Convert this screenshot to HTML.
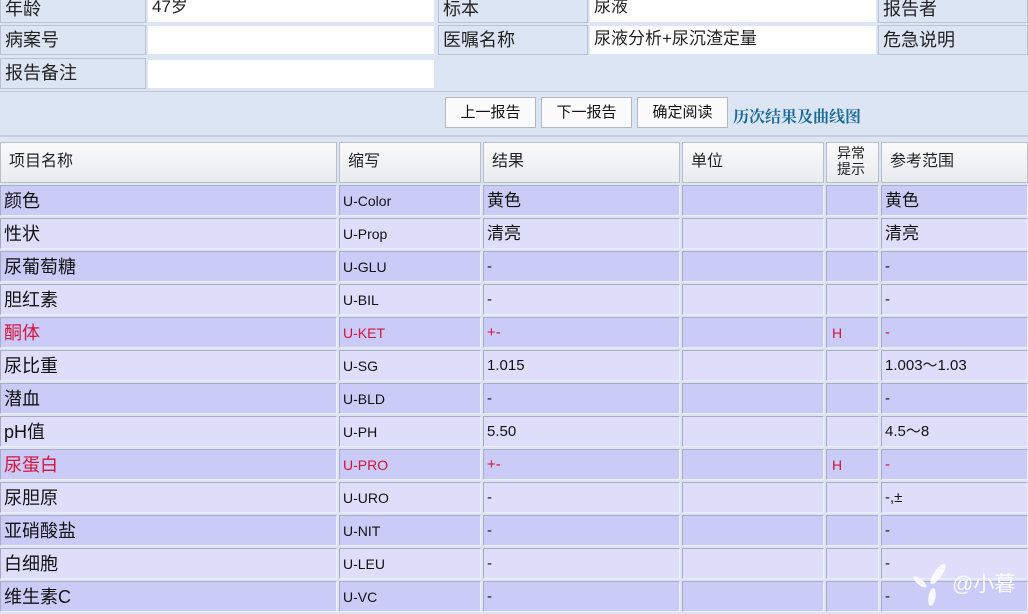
<!DOCTYPE html>
<html><head><meta charset="utf-8"><style>
body{margin:0;width:1028px;height:614px;overflow:hidden;background:#dce5f3;font-family:"Liberation Sans","Noto Sans CJK SC",sans-serif;position:relative}
div{position:absolute;box-sizing:border-box}
.l{background:#dce5f3;border:1px solid #b8c2d2;font-size:18px;color:#222;padding-left:4px;line-height:28px}
.v{background:#fff;font-size:17px;color:#222;padding-left:4px;line-height:26px}
.btn{top:97px;height:31px;background:#fbfbfb;border:1px solid #b5b9c2;font-size:15px;line-height:29px;text-align:center;color:#111}
.h{top:142px;height:41px;background:linear-gradient(#fafafa,#e9ebef);border:1px solid #bdbfc6;font-size:16px;line-height:38px;padding-left:8px;color:#222}
.r{height:31px;border:1px solid #a9acc0;border-right-color:#eef;border-bottom-color:#eef;line-height:30px;padding-left:3px;color:#111;white-space:nowrap}
.a{background:#cbcbf8}.b{background:#dedefa}
.c0{left:0;width:337px;font-size:18px}.c1{left:339px;width:142px;font-size:14px}.c2{left:483px;width:197px;font-size:15px}.c3{left:682px;width:142px}.c4{left:826px;width:53px;font-size:14px;padding-left:5px}.c5{left:881px;width:147px;font-size:15px}
.red{color:#d4143c}
</style></head><body>
<div class="l" style="left:0;top:-4px;width:146px;height:27px;line-height:24px">年龄</div>
<div class="v" style="left:148px;top:-4px;width:286px;height:26px;line-height:22px">47岁</div>
<div class="l" style="left:438px;top:-4px;width:150px;height:27px;line-height:24px">标本</div>
<div class="v" style="left:590px;top:-4px;width:286px;height:26px;line-height:22px">尿液</div>
<div class="l" style="left:878px;top:-4px;width:150px;height:27px;line-height:24px">报告者</div>
<div class="l" style="left:0;top:25px;width:146px;height:30px">病案号</div>
<div class="v" style="left:148px;top:26px;width:286px;height:28px"></div>
<div class="l" style="left:438px;top:25px;width:150px;height:30px">医嘱名称</div>
<div class="v" style="left:590px;top:26px;width:286px;height:28px">尿液分析+尿沉渣定量</div>
<div class="l" style="left:878px;top:25px;width:150px;height:30px">危急说明</div>
<div class="l" style="left:0;top:58px;width:146px;height:31px">报告备注</div>
<div class="v" style="left:148px;top:60px;width:286px;height:28px"></div>
<div style="left:0;top:91px;width:1028px;height:1px;background:#c2cad8"></div>
<div style="left:0;top:135px;width:1028px;height:2px;background:#c8ced8"></div>
<div class="btn" style="left:445px;width:91px">上一报告</div>
<div class="btn" style="left:541px;width:91px">下一报告</div>
<div class="btn" style="left:637px;width:91px">确定阅读</div>
<div style="left:733px;top:104px;font-size:16px;font-weight:bold;color:#1a6a9a;font-family:'Noto Serif CJK SC',serif">历次结果及曲线图</div>
<div class="h" style="left:0;width:337px">项目名称</div>
<div class="h" style="left:339px;width:142px">缩写</div>
<div class="h" style="left:483px;width:197px">结果</div>
<div class="h" style="left:682px;width:142px">单位</div>
<div class="h" style="left:826px;width:53px;font-size:14px;line-height:16px;padding:2px 0 0 10px">异常<br>提示</div>
<div class="h" style="left:881px;width:147px">参考范围</div>

<div class="r a c0" style="top:185px">颜色</div><div class="r a c1" style="top:185px">U-Color</div><div class="r a c2" style="top:185px;font-size:17px">黄色</div><div class="r a c3" style="top:185px"></div><div class="r a c4" style="top:185px"></div><div class="r a c5" style="top:185px;font-size:17px">黄色</div>
<div class="r b c0" style="top:218px">性状</div><div class="r b c1" style="top:218px">U-Prop</div><div class="r b c2" style="top:218px;font-size:17px">清亮</div><div class="r b c3" style="top:218px"></div><div class="r b c4" style="top:218px"></div><div class="r b c5" style="top:218px;font-size:17px">清亮</div>
<div class="r a c0" style="top:251px">尿葡萄糖</div><div class="r a c1" style="top:251px">U-GLU</div><div class="r a c2" style="top:251px">-</div><div class="r a c3" style="top:251px"></div><div class="r a c4" style="top:251px"></div><div class="r a c5" style="top:251px">-</div>
<div class="r b c0" style="top:284px">胆红素</div><div class="r b c1" style="top:284px">U-BIL</div><div class="r b c2" style="top:284px">-</div><div class="r b c3" style="top:284px"></div><div class="r b c4" style="top:284px"></div><div class="r b c5" style="top:284px">-</div>
<div class="r a c0 red" style="top:317px">酮体</div><div class="r a c1 red" style="top:317px">U-KET</div><div class="r a c2 red" style="top:317px">+-</div><div class="r a c3" style="top:317px"></div><div class="r a c4 red" style="top:317px">H</div><div class="r a c5 red" style="top:317px">-</div>
<div class="r b c0" style="top:350px">尿比重</div><div class="r b c1" style="top:350px">U-SG</div><div class="r b c2" style="top:350px">1.015</div><div class="r b c3" style="top:350px"></div><div class="r b c4" style="top:350px"></div><div class="r b c5" style="top:350px">1.003～1.03</div>
<div class="r a c0" style="top:383px">潜血</div><div class="r a c1" style="top:383px">U-BLD</div><div class="r a c2" style="top:383px">-</div><div class="r a c3" style="top:383px"></div><div class="r a c4" style="top:383px"></div><div class="r a c5" style="top:383px">-</div>
<div class="r b c0" style="top:416px">pH值</div><div class="r b c1" style="top:416px">U-PH</div><div class="r b c2" style="top:416px">5.50</div><div class="r b c3" style="top:416px"></div><div class="r b c4" style="top:416px"></div><div class="r b c5" style="top:416px">4.5～8</div>
<div class="r a c0 red" style="top:449px">尿蛋白</div><div class="r a c1 red" style="top:449px">U-PRO</div><div class="r a c2 red" style="top:449px">+-</div><div class="r a c3" style="top:449px"></div><div class="r a c4 red" style="top:449px">H</div><div class="r a c5 red" style="top:449px">-</div>
<div class="r b c0" style="top:482px">尿胆原</div><div class="r b c1" style="top:482px">U-URO</div><div class="r b c2" style="top:482px">-</div><div class="r b c3" style="top:482px"></div><div class="r b c4" style="top:482px"></div><div class="r b c5" style="top:482px">-,±</div>
<div class="r a c0" style="top:515px">亚硝酸盐</div><div class="r a c1" style="top:515px">U-NIT</div><div class="r a c2" style="top:515px">-</div><div class="r a c3" style="top:515px"></div><div class="r a c4" style="top:515px"></div><div class="r a c5" style="top:515px">-</div>
<div class="r b c0" style="top:548px">白细胞</div><div class="r b c1" style="top:548px">U-LEU</div><div class="r b c2" style="top:548px">-</div><div class="r b c3" style="top:548px"></div><div class="r b c4" style="top:548px"></div><div class="r b c5" style="top:548px">-</div>
<div class="r a c0" style="top:581px">维生素C</div><div class="r a c1" style="top:581px">U-VC</div><div class="r a c2" style="top:581px">-</div><div class="r a c3" style="top:581px"></div><div class="r a c4" style="top:581px"></div><div class="r a c5" style="top:581px">-</div>
<svg style="position:absolute;left:910px;top:562px" width="44" height="46" viewBox="0 0 44 46"><g fill="#fff" opacity="0.85"><ellipse cx="28" cy="12" rx="4" ry="12" transform="rotate(35 28 12)"/><ellipse cx="10" cy="20" rx="3" ry="8" transform="rotate(-50 10 20)"/><ellipse cx="22" cy="35" rx="3.5" ry="9" transform="rotate(10 22 35)"/></g></svg>
<div style="left:952px;top:568px;font-size:21px;color:#fff;opacity:.9">@小暮</div>
</body></html>
